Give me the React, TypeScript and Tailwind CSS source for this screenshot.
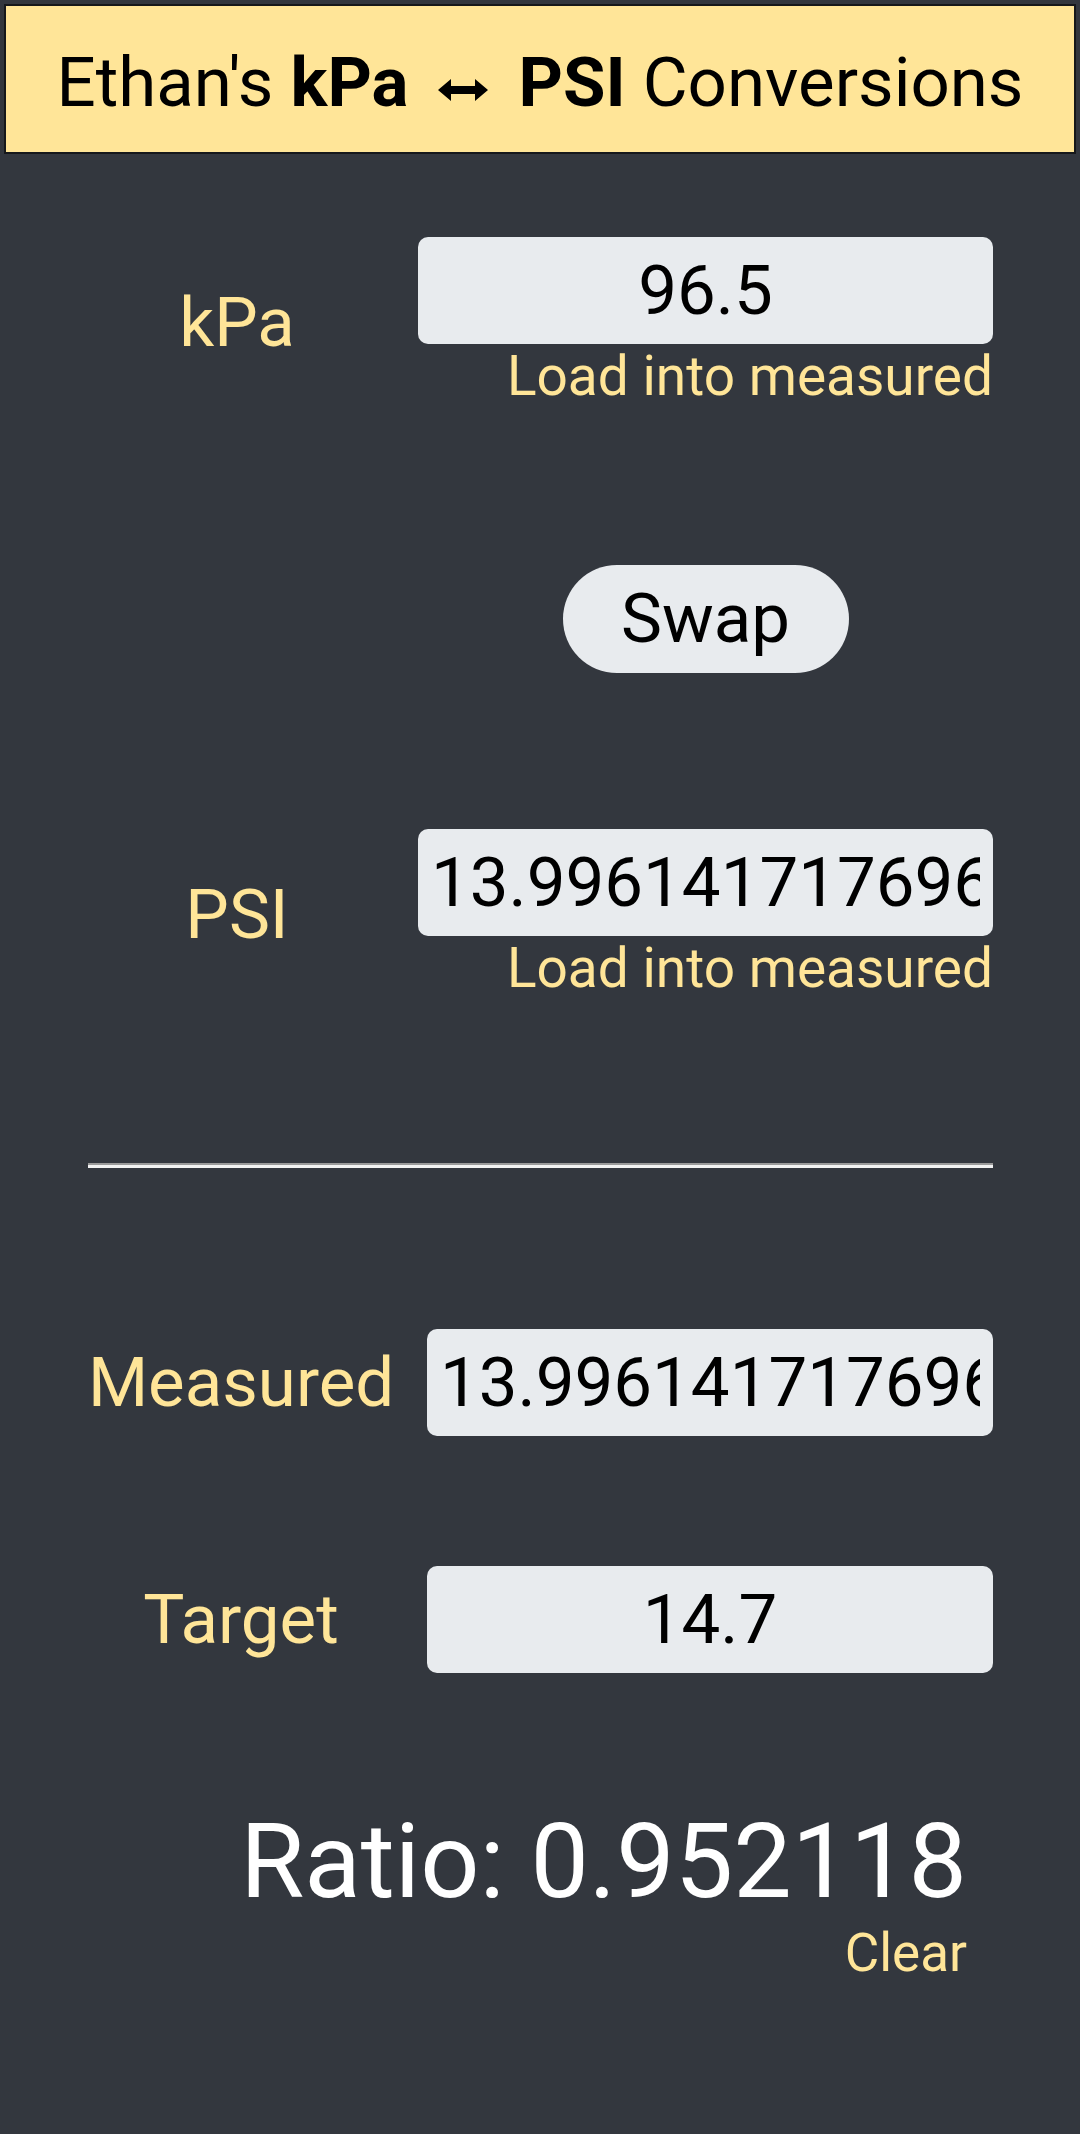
import React from "react";

const PSI_VALUE = "13.99614171769626";

function Field({ value }: { value: string }) {
  return (
    <input
      type="text"
      readOnly
      value={value}
      className="h-[107px] w-full rounded-[10px] bg-[#e8ebee] px-[13px] text-center text-[69px] text-black outline-none font-['Roboto',sans-serif]"
    />
  );
}

function Arrow() {
  return (
    <svg width="50" height="22" viewBox="0 0 50 22" className="mx-[30px] mt-[14px]">
      <path d="M0 11 L13 0 L13 7 L37 7 L37 0 L50 11 L37 22 L37 15 L13 15 L13 22 Z" fill="#000" />
    </svg>
  );
}

export default function App() {
  return (
    <div className="min-h-screen bg-[#33373e] pb-10 font-['Roboto',sans-serif]">
      <div className="px-[4px] pt-[4px]">
        <div className="flex h-[150px] items-center justify-center border-2 border-[#16181b] bg-[#ffe598] pt-[8px] text-[69px] text-black">
          <span>Ethan's&nbsp;</span>
          <span className="font-bold">kPa</span>
          <Arrow />
          <span className="font-bold">PSI</span>
          <span>&nbsp;Conversions</span>
        </div>
      </div>

      <div className="ml-[88px] mr-[87px]">
        {/* kPa row */}
        <div className="mt-[83px] flex gap-[32px]">
          <div className="flex w-[298px] items-center justify-center text-[69px] text-[#ffe598]">kPa</div>
          <div className="flex flex-1 flex-col">
            <Field value="96.5" />
            <div className="text-right text-[55px] leading-[64px] text-[#ffe598]">Load into measured</div>
          </div>
        </div>

        {/* Swap */}
        <div className="mt-[157px] flex gap-[32px]">
          <div className="w-[298px]" />
          <div className="flex flex-1 justify-center">
            <button className="h-[108px] w-[286px] rounded-full bg-[#e8ebee] text-[69px] text-black">Swap</button>
          </div>
        </div>

        {/* PSI row */}
        <div className="mt-[156px] flex gap-[32px]">
          <div className="flex w-[298px] items-center justify-center text-[69px] text-[#ffe598]">PSI</div>
          <div className="flex flex-1 flex-col">
            <Field value={PSI_VALUE} />
            <div className="text-right text-[55px] leading-[64px] text-[#ffe598]">Load into measured</div>
          </div>
        </div>

        {/* divider */}
        <div className="mt-[163px] h-[5px] border-t-2 border-[#9a9a9a] bg-[#f2f2f2]" />

        {/* Measured */}
        <div className="mt-[161px] flex gap-[33px]">
          <div className="flex w-[306px] items-center justify-center text-[69px] text-[#ffe598]">Measured</div>
          <div className="flex-1">
            <Field value={PSI_VALUE} />
          </div>
        </div>

        {/* Target */}
        <div className="mt-[130px] flex gap-[33px]">
          <div className="flex w-[306px] items-center justify-center text-[69px] text-[#ffe598]">Target</div>
          <div className="flex-1">
            <Field value="14.7" />
          </div>
        </div>

        {/* Ratio */}
        <div className="mt-[126px] pr-[26px] text-right">
          <div className="text-[104px] leading-[125px] text-white">Ratio: 0.952118</div>
          <div className="text-[53px] leading-[58px] text-[#ffe598]">Clear</div>
        </div>
      </div>
    </div>
  );
}
